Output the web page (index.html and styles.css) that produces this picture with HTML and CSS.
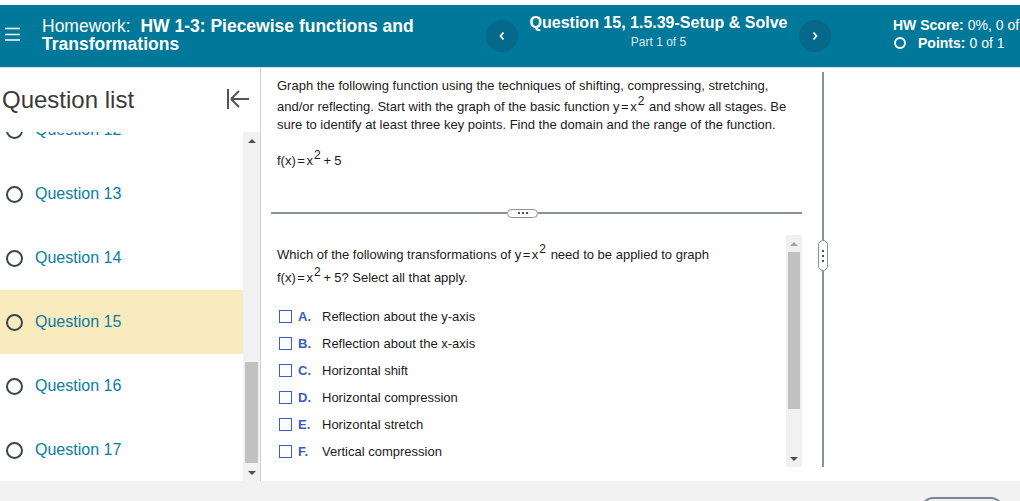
FILE: index.html
```html
<!DOCTYPE html>
<html lang="en">
<head>
<meta charset="utf-8">
<title>Homework: HW 1-3</title>
<link rel="stylesheet" href="styles.css">
</head>
<body>
<div class="topstrip"></div>
<header class="hdr">
  <div class="menu">
    <svg width="15" height="14" viewBox="0 0 15 14"><path d="M0 1.5H15M0 7.5H15M0 13H15" stroke="#fff" stroke-width="1.6"/></svg>
  </div>
  <div class="hw-title"><span class="hw-label">Homework:</span> <b>HW 1-3: Piecewise functions and Transformations</b></div>
  <div class="qnav">
    <button class="navbtn" aria-label="Previous question"><svg width="6" height="10" viewBox="0 0 6 10"><path d="M4.5 1.5L1.5 5L4.5 8.5" fill="none" stroke="#fff" stroke-width="1.8"/></svg></button>
    <div class="qnav-text">
      <div class="qname">Question 15, 1.5.39-Setup &amp; Solve</div>
      <div class="qpart">Part 1 of 5</div>
    </div>
    <button class="navbtn" aria-label="Next question"><svg width="6" height="10" viewBox="0 0 6 10"><path d="M1.5 1.5L4.5 5L1.5 8.5" fill="none" stroke="#fff" stroke-width="1.8"/></svg></button>
  </div>
  <div class="score">
    <div class="score-line"><b>HW Score:</b> 0%, 0 of 17 points</div>
    <div class="score-line pts"><span class="ring"></span><b>Points:</b> 0 of 1</div>
  </div>
</header>

<div class="main">
  <aside class="sidebar">
    <div class="side-head">
      <h2 class="side-title">Question list</h2>
      <svg class="collapse" width="24" height="22" viewBox="0 0 24 22"><path d="M2 1V21M5 11H23M5 11L13 3M5 11L13 19" fill="none" stroke="#555" stroke-width="2"/></svg>
    </div>
    <div class="side-body">
      <div class="qlist">
        <div class="qlist-inner">
          <div class="qitem"><span class="radio"></span><span class="qlabel">Question 12</span></div>
          <div class="qitem"><span class="radio"></span><span class="qlabel">Question 13</span></div>
          <div class="qitem"><span class="radio"></span><span class="qlabel">Question 14</span></div>
          <div class="qitem current"><span class="radio"></span><span class="qlabel">Question 15</span></div>
          <div class="qitem"><span class="radio"></span><span class="qlabel">Question 16</span></div>
          <div class="qitem"><span class="radio"></span><span class="qlabel">Question 17</span></div>
        </div>
      </div>
      <div class="sbar">
        <div class="sbar-btn"><span class="tri-up"></span></div>
        <div class="sbar-track side-track"><div class="sbar-thumb side-thumb"></div></div>
        <div class="sbar-btn"><span class="tri-down"></span></div>
      </div>
    </div>
  </aside>

  <section class="qpane">
    <div class="qtop">
      <p class="qtext">Graph the following function using the techniques of shifting, compressing, stretching, and/or reflecting. Start with the graph of the basic function <span class="m">y<span class="op">=</span>x<sup>2</sup></span> and show all stages. Be sure to identify at least three key points. Find the domain and the range of the function.</p>
      <p class="qtext fx"><span class="m">f(x)<span class="op">=</span>x<sup>2</sup><span class="plus">+</span>5</span></p>
    </div>
    <div class="divider">
      <span class="rule rule-left"></span>
      <span class="hpill"><i></i><i></i><i></i></span>
      <span class="rule rule-right"></span>
    </div>
    <div class="qbottom">
      <div class="qbody">
        <p class="qtext ask">Which of the following transformations of <span class="m">y<span class="op">=</span>x<sup>2</sup></span> need to be applied to graph <span class="m">f(x)<span class="op">=</span>x<sup>2</sup><span class="plus">+</span>5?</span> Select all that apply.</p>
        <ul class="opts">
          <li class="opt"><span class="cb"></span><span class="letter">A.</span><span class="otext">Reflection about the y-axis</span></li>
          <li class="opt"><span class="cb"></span><span class="letter">B.</span><span class="otext">Reflection about the x-axis</span></li>
          <li class="opt"><span class="cb"></span><span class="letter">C.</span><span class="otext">Horizontal shift</span></li>
          <li class="opt"><span class="cb"></span><span class="letter">D.</span><span class="otext">Horizontal compression</span></li>
          <li class="opt"><span class="cb"></span><span class="letter">E.</span><span class="otext">Horizontal stretch</span></li>
          <li class="opt"><span class="cb"></span><span class="letter">F.</span><span class="otext">Vertical compression</span></li>
        </ul>
      </div>
      <div class="sbar inner-sbar">
        <div class="sbar-btn"><span class="tri-up light"></span></div>
        <div class="sbar-track"><div class="sbar-thumb inner-thumb"></div></div>
        <div class="sbar-btn"><span class="tri-down"></span></div>
      </div>
    </div>
  </section>

  <div class="splitter">
    <span class="vline vline-top"></span>
    <span class="vpill"><i></i><i></i><i></i></span>
    <span class="vline vline-bottom"></span>
  </div>
  <div class="rest"></div>
</div>

<footer class="foot"><div class="footbtn"></div></footer>
</body>
</html>
```

FILE: styles.css
```css
* { box-sizing: border-box; }
html, body { margin: 0; padding: 0; }
body {
  width: 1020px;
  height: 501px;
  overflow: hidden;
  background: #fff;
  font-family: "Liberation Sans", Arial, sans-serif;
  color: #1b1b1b;
}

.topstrip { height: 5px; background: #fff; }

/* Header */
.hdr {
  height: 63px;
  background: #007899;
  border-bottom: 1px solid #cfe0e8;
  display: flex;
  color: #fff;
  white-space: nowrap;
  overflow: hidden;
}
.hdr > * { flex: none; }
.menu { width: 42px; padding: 22px 0 0 5px; }
.menu svg { display: block; }
.hw-title {
  width: 444px;
  padding-top: 12px;
  font-size: 17.5px;
  line-height: 18px;
  white-space: normal;
}
.hw-label { margin-right: 5px; }
.qnav { width: 345px; display: flex; align-items: center; }
.navbtn {
  width: 32px; height: 32px;
  border: 0; border-radius: 50%;
  background: #06688a;
  display: flex; align-items: center; justify-content: center;
  padding: 0; flex: none;
}
.navbtn svg { display: block; }
.qnav-text { flex: 1; text-align: center; align-self: flex-start; padding-top: 8px; }
.qname { font-weight: bold; font-size: 16px; line-height: 20px; }
.qpart { font-size: 12px; line-height: 16px; color: #dbe9ef; margin-top: 1px; }
.score { margin-left: 62px; padding-top: 12px; font-size: 14px; line-height: 17.5px; }
.pts { display: flex; align-items: center; }
.ring {
  width: 12px; height: 12px;
  border: 2px solid #fff; border-radius: 50%;
  margin: 0 12px 0 1px;
  flex: none;
}
.pts b { margin-right: 4px; }

/* Main */
.main { display: flex; height: 413px; }

.sidebar {
  width: 261px;
  border-right: 1px solid #c9d0dc;
  display: flex; flex-direction: column;
  flex: none;
}
.side-head {
  height: 64px;
  display: flex; align-items: center; justify-content: space-between;
  padding: 0 10px 0 2px;
}
.side-title {
  margin: 0;
  font-size: 24px; font-weight: normal; line-height: 28px;
  color: #3a3a3a;
}
.collapse { display: block; margin-top: -3px; }
.side-body { flex: 1; display: flex; overflow: hidden; }
.qlist { width: 243px; overflow: hidden; }
.qlist-inner { margin-top: -34px; }
.qitem {
  height: 64px;
  display: flex; align-items: center;
  padding-left: 6px;
}
.qitem.current { background: #f9ebbe; }
.radio {
  width: 17px; height: 17px;
  border: 2px solid #3b4651; border-radius: 50%;
  margin-right: 12px; flex: none;
}
.qlabel { font-size: 16px; color: #0b7ca5; }

/* scrollbars */
.sbar { width: 17px; background: #f1f1f1; display: flex; flex-direction: column; flex: none; }
.sbar-btn { height: 17px; display: flex; align-items: center; justify-content: center; }
.sbar-track { flex: 1; padding: 0 2px; }
.side-track { padding-top: 213px; }
.sbar-thumb { background: #c1c1c1; }
.side-thumb { height: 101px; }
.tri-up, .tri-down { width: 0; height: 0; border-left: 4px solid transparent; border-right: 4px solid transparent; }
.tri-up { border-bottom: 4px solid #505050; }
.tri-up.light { border-bottom-color: #a3a3a3; }
.tri-down { border-top: 4px solid #505050; }

/* Question pane */
.qpane { width: 550px; display: flex; flex-direction: column; flex: none; }
.qtop { height: 140px; padding: 9px 18px 0 16px; }
.qtext { margin: 0; font-size: 13px; line-height: 18px; color: #1b1b1b; }
.qtext.fx { margin-top: 15px; }
.m { white-space: nowrap; }
.m sup { font-size: 12px; vertical-align: 6px; line-height: 12px; margin-left: 1px; margin-right: 1px; }
.op { margin: 0 1.5px; }
.plus { margin: 0 3px 0 2px; }

.divider { height: 10px; display: flex; align-items: center; margin: 0 9px 0 10px; }
.rule { height: 1.5px; background: #8a929f; }
.rule-left { width: 236px; }
.rule-right { flex: 1; }
.hpill {
  width: 31px; height: 9px;
  border: 1.5px solid #8a929f; border-radius: 5px;
  background: #fff;
  display: flex; align-items: center; justify-content: center; gap: 2px;
}
.hpill i, .vpill i { display: block; width: 2px; height: 2px; background: #4a5563; }

.qbottom { margin-top: 17px; height: 232px; display: flex; }
.qbody { flex: 1; padding: 8px 40px 0 16px; }
.ask { line-height: 23px; }
.ask .m sup { line-height: 0; }
.opts { list-style: none; margin: 14px 0 0; padding: 0 0 0 2px; }
.opt { height: 27px; display: flex; align-items: center; font-size: 13px; }
.cb { width: 13px; height: 13px; border: 1.5px solid #3d5ccb; margin-right: 6px; flex: none; }
.letter { width: 24px; font-weight: bold; color: #3a5ac7; }
.otext { color: #1b1b1b; }
.inner-sbar { width: 16px; margin-right: 9px; }
.inner-thumb { height: 157px; }

/* splitter */
.splitter { width: 24px; display: flex; flex-direction: column; align-items: center; padding: 4px 0 14px; flex: none; }
.vline { width: 1.5px; background: #8a929f; }
.vline-top { height: 168px; }
.vline-bottom { flex: 1; }
.vpill {
  width: 10px; height: 31px;
  border: 1.5px solid #8a929f; border-radius: 5px;
  background: #fff;
  display: flex; flex-direction: column; align-items: center; justify-content: center; gap: 3px;
}
.rest { flex: 1; }

/* footer */
.foot { height: 20px; background: #f2f2f2; overflow: hidden; }
.footbtn {
  margin: 16px 0 0 921px;
  width: 82px; height: 24px;
  border: 2px solid #7d8594; border-radius: 12px;
  background: #f2f2f2;
}
```
